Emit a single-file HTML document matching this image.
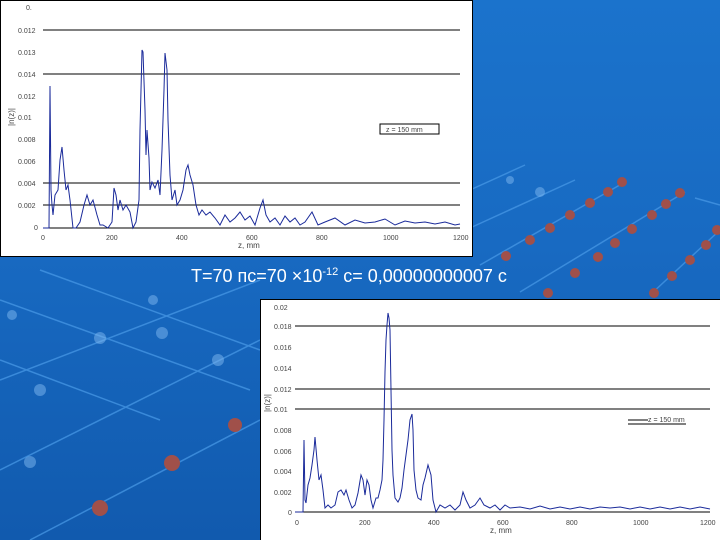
<!DOCTYPE html>
<html><head><meta charset="utf-8"><style>
html,body{margin:0;padding:0}
body{width:720px;height:540px;overflow:hidden;position:relative;background:linear-gradient(180deg,#1b73cc 0%,#186ac2 45%,#115aae 100%);font-family:"Liberation Sans",sans-serif}
svg{position:absolute;left:0;top:0}
.t{position:absolute;left:191px;top:266px;color:#fff;font-size:18px;white-space:nowrap}
.t sup{font-size:11px}
</style></head><body>
<svg width="720" height="540">
<g stroke="#4a9be8" stroke-width="1.5" opacity="0.7">
<line x1="0" y1="380" x2="260" y2="280"/><line x1="0" y1="470" x2="260" y2="340"/>
<line x1="30" y1="540" x2="260" y2="420"/><line x1="0" y1="300" x2="250" y2="390"/>
<line x1="0" y1="360" x2="160" y2="420"/><line x1="40" y1="270" x2="260" y2="350"/>
<line x1="470" y1="190" x2="525" y2="165"/><line x1="470" y1="228" x2="575" y2="180"/>
<line x1="480" y1="265" x2="625" y2="182"/><line x1="520" y1="292" x2="685" y2="192"/>
<line x1="650" y1="295" x2="720" y2="230"/><line x1="695" y1="198" x2="720" y2="205"/>
</g>
<g fill="#7fb8f0" opacity="0.5">
<circle cx="100" cy="338" r="6"/><circle cx="40" cy="390" r="6"/><circle cx="162" cy="333" r="6"/><circle cx="218" cy="360" r="6"/><circle cx="30" cy="462" r="6"/><circle cx="153" cy="300" r="5"/><circle cx="12" cy="315" r="5"/><circle cx="540" cy="192" r="5"/><circle cx="510" cy="180" r="4"/>
</g>
<g fill="#a0504a">
<circle cx="235" cy="425" r="7"/><circle cx="172" cy="463" r="8"/><circle cx="100" cy="508" r="8"/>
<circle cx="622" cy="182" r="5"/><circle cx="608" cy="192" r="5"/><circle cx="590" cy="203" r="5"/><circle cx="570" cy="215" r="5"/><circle cx="550" cy="228" r="5"/><circle cx="530" cy="240" r="5"/><circle cx="506" cy="256" r="5"/>
<circle cx="680" cy="193" r="5"/><circle cx="666" cy="204" r="5"/><circle cx="652" cy="215" r="5"/><circle cx="632" cy="229" r="5"/><circle cx="615" cy="243" r="5"/><circle cx="598" cy="257" r="5"/><circle cx="575" cy="273" r="5"/><circle cx="548" cy="293" r="5"/>
<circle cx="717" cy="230" r="5"/><circle cx="706" cy="245" r="5"/><circle cx="690" cy="260" r="5"/><circle cx="672" cy="276" r="5"/><circle cx="654" cy="293" r="5"/>
</g>
<rect x="0.5" y="0.5" width="472" height="256" fill="#fff" stroke="#000"/>
<g stroke="#000" stroke-width="1">
<line x1="43" y1="30" x2="460" y2="30"/><line x1="43" y1="74" x2="460" y2="74"/>
<line x1="43" y1="183" x2="460" y2="183"/><line x1="43" y1="205" x2="460" y2="205"/>
<line x1="43" y1="228" x2="460" y2="228"/>
</g>
<rect x="380" y="124" width="59" height="10" fill="#fff" stroke="#000"/>
<g font-size="7" fill="#444">
<text x="386" y="132">z = 150 mm</text>
<text x="26" y="10">0.</text><text x="18" y="33">0.012</text><text x="18" y="55">0.013</text><text x="18" y="77">0.014</text><text x="18" y="99">0.012</text><text x="18" y="120">0.01</text><text x="18" y="142">0.008</text><text x="18" y="164">0.006</text><text x="18" y="186">0.004</text><text x="18" y="208">0.002</text><text x="34" y="230">0</text>
<text x="41" y="240">0</text><text x="106" y="240">200</text><text x="176" y="240">400</text><text x="246" y="240">600</text><text x="316" y="240">800</text><text x="383" y="240">1000</text><text x="453" y="240">1200</text>
<text x="238" y="248" font-size="8">z, mm</text>
<text transform="translate(14,126) rotate(-90)" font-size="8">|n(z)|</text>
</g>
<polyline fill="none" stroke="#1a2a9a" stroke-width="1" points="43,228 49,228 50,86 51,190 52,205 53,215 55,195 58,190 60,160 62,147 64,170 66,190 68,185 70,200 73,228 76,228 80,222 84,205 87,195 90,205 93,200 97,215 100,225 103,225 108,228 112,222 114,188 116,195 118,210 120,200 123,210 126,205 130,212 133,228 136,222 139,200 140,130 142,50 143,52 145,110 146,155 147,130 149,158 150,190 152,182 155,188 158,180 160,195 162,150 164,90 165,53 167,70 168,120 170,175 172,200 175,190 177,205 180,200 183,190 186,170 188,165 190,175 193,185 196,205 199,215 202,210 206,215 210,212 215,218 220,225 225,215 230,222 235,218 240,212 245,220 250,216 255,225 260,208 263,200 266,215 270,222 275,218 280,225 285,216 290,222 295,218 300,225 305,222 312,212 318,225 325,222 335,218 345,225 355,220 365,223 375,222 385,219 395,225 405,221 415,223 425,222 435,224 445,222 455,225 460,224"/>
<rect x="260.5" y="299.5" width="462" height="245" fill="#fff" stroke="#000"/>
<g stroke="#000" stroke-width="1">
<line x1="295" y1="326" x2="710" y2="326"/><line x1="295" y1="389" x2="710" y2="389"/>
<line x1="295" y1="409" x2="710" y2="409"/><line x1="295" y1="512" x2="710" y2="512"/>
</g>
<line x1="628" y1="420" x2="648" y2="420" stroke="#000"/>
<line x1="628" y1="424" x2="686" y2="424" stroke="#000"/>
<g font-size="7" fill="#444">
<text x="648" y="422">z = 150 mm</text>
<text x="274" y="310">0.02</text><text x="274" y="329">0.018</text><text x="274" y="350">0.016</text><text x="274" y="371">0.014</text><text x="274" y="392">0.012</text><text x="274" y="412">0.01</text><text x="274" y="433">0.008</text><text x="274" y="454">0.006</text><text x="274" y="474">0.004</text><text x="274" y="495">0.002</text><text x="288" y="515">0</text>
<text x="295" y="525">0</text><text x="359" y="525">200</text><text x="428" y="525">400</text><text x="497" y="525">600</text><text x="566" y="525">800</text><text x="633" y="525">1000</text><text x="700" y="525">1200</text>
<text x="490" y="533" font-size="8">z, mm</text>
<text transform="translate(270,412) rotate(-90)" font-size="8">|n(z)|</text>
</g>
<polyline fill="none" stroke="#1a2a9a" stroke-width="1" points="295,512 303,512 304,440 305,500 306,503 308,485 310,478 312,465 314,450 315,437 317,460 319,480 321,475 323,490 325,508 328,505 331,508 335,505 338,492 341,490 344,495 346,490 349,500 352,508 355,505 358,493 361,475 363,480 365,495 367,480 369,485 371,500 373,508 376,498 378,498 380,490 382,480 383,460 384,420 385,372 386,340 387,325 388,313 389,318 390,330 391,390 392,450 393,475 395,498 398,502 400,498 402,488 404,470 406,455 408,440 410,420 412,414 413,430 414,470 416,490 418,498 421,500 423,485 425,478 428,465 431,475 433,500 436,512 440,505 445,508 450,505 455,510 460,505 463,492 466,500 470,508 475,505 480,498 484,505 490,508 495,505 500,510 505,505 510,508 520,507 530,509 540,506 550,509 560,507 570,509 580,507 590,509 600,507 610,508 620,507 630,509 640,507 650,509 660,507 670,509 680,507 690,509 700,507 710,509"/>
</svg>
<div class="t">T=70 пс=70 ×10<sup>-12</sup> с= 0,00000000007 с</div>
</body></html>
